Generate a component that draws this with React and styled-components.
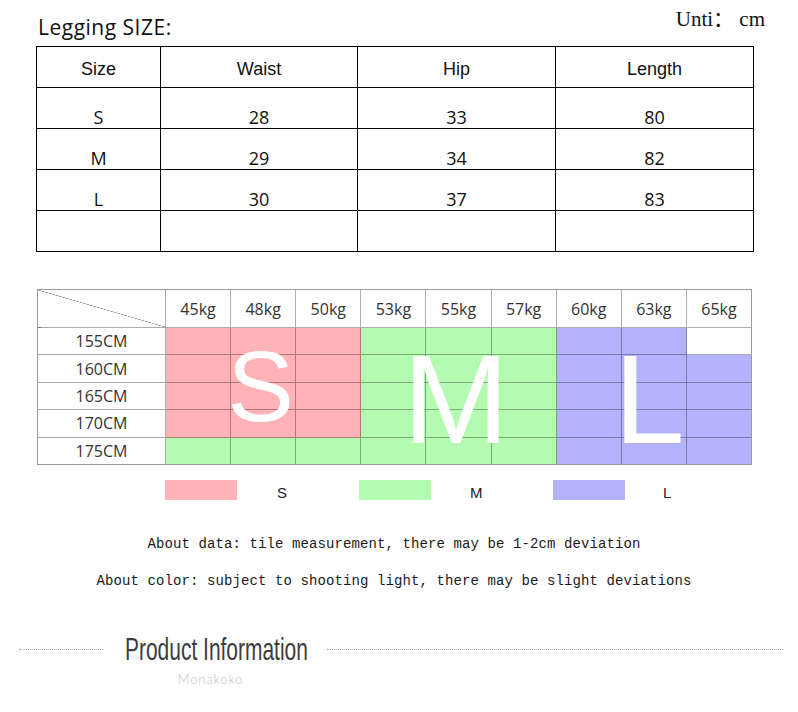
import React from 'react';
import styled, { createGlobalStyle } from 'styled-components';

const GlobalStyle = createGlobalStyle`
body {
    margin: 0;
    background: #fff;
}
`;

const Page = styled.div`
width: 798px;
height: 712px;
overflow: hidden;
background: #fff;
display: flex;
flex-direction: column;
`;

const TitleBar = styled.div`
height: 46px;
display: flex;
justify-content: space-between;
align-items: flex-start;
padding: 0 33px 0 38px;
box-sizing: border-box;
`;

const Heading = styled.div`
margin-top: 14px;
font-family: "Open Sans", sans-serif;
font-size: 21px;
letter-spacing: 0.5px;
line-height: 26px;
color: #111;
`;

const Unit = styled.div`
margin-top: 6px;
font-family: "Liberation Serif", "Noto Sans CJK SC", serif;
font-size: 21px;
line-height: 26px;
color: #111;
white-space: pre;
`;

const SizeTable = styled.div`
margin-left: 36px;
display: grid;
grid-template-columns: 124px 197px 198px 198px;
grid-auto-rows: 41px;
width: max-content;
border-top: 1px solid #000;
border-left: 1px solid #000;
`;

const TableCell = styled.div`
box-sizing: border-box;
border-right: 1px solid #000;
border-bottom: 1px solid #000;
display: flex;
justify-content: center;
align-items: flex-start;
padding-top: ${p => p.$head ? '12px' : '17px'};
font-family: ${p => p.$head ? '"Liberation Sans", Arial' : '"Open Sans"'}, sans-serif;
font-size: 18px;
line-height: ${p => p.$head ? '21px' : '24px'};
color: #111;
`;

const Chart = styled.div`
margin: 37px 0 0 37px;
width: 715px;
height: 176px;
box-sizing: border-box;
display: grid;
grid-template-columns: 128px repeat(9, 1fr);
grid-template-rows: 38px repeat(5, 1fr);
border-top: 1px solid #9a9a9a;
border-left: 1px solid #9a9a9a;
`;

const ChartCell = styled.div`
grid-row: ${p => p.$row};
grid-column: ${p => p.$col};
box-sizing: border-box;
border-right: 1px solid ${p => p.$edge ? '#9a9a9a' : 'rgba(0, 0, 0, 0.32)'};
border-bottom: 1px solid ${p => p.$edgeB ? '#9a9a9a' : 'rgba(0, 0, 0, 0.32)'};
background: ${p => p.$bg || '#fff'};
display: flex;
align-items: center;
justify-content: center;
font-family: "Open Sans", sans-serif;
font-size: 16px;
color: #333;
`;

const Corner = styled(ChartCell)`
background: linear-gradient(to top right, transparent calc(50% - 0.6px), #8a8a8a 50%, transparent calc(50% + 0.6px));
`;

const BigLetter = styled.div`
grid-row: 2 / 7;
grid-column: ${p => p.$cols};
z-index: 1;
justify-self: center;
align-self: start;
margin-top: 8px;
margin-right: ${p => p.$shift || 0}px;
font-family: "Liberation Sans", Arial, sans-serif;
font-size: ${p => p.$size}px;
line-height: 1;
color: #fff;
pointer-events: none;
`;

const Legend = styled.div`
margin: 15px 0 0 165px;
display: grid;
grid-template-columns: repeat(3, 194px);
`;

const LegendItem = styled.div`
display: flex;
align-items: center;
height: 20px;
`;

const Swatch = styled.div`
width: 72px;
height: 20px;
background: ${p => p.$color};
`;

const LegendLabel = styled.span`
margin: 4px 0 0 ${p => p.$gap}px;
font-family: "Liberation Sans", Arial, sans-serif;
font-size: 15px;
color: #222;
`;

const Notes = styled.div`
margin-top: 35px;
padding-right: 10px;
display: flex;
flex-direction: column;
align-items: center;
gap: 19px;
`;

const Note = styled.div`
font-family: "Liberation Mono", monospace;
font-size: 14px;
letter-spacing: 0.1px;
line-height: 18px;
color: #1a1a1a;
white-space: pre;
`;

const Footer = styled.div`
margin-top: 41px;
display: flex;
align-items: flex-start;
padding: 0 15px 0 19px;
`;

const Rule = styled.div`
margin-top: 18px;
border-top: 1px dotted #a8a8a8;
width: ${p => p.$width ? `${p.$width}px` : 'auto'};
flex: ${p => p.$width ? 'none' : 1};
`;

const TitleBlock = styled.div`
width: 183px;
margin: 0 19px 0 22px;
display: flex;
flex-direction: column;
align-items: center;
`;

const Title = styled.div`
align-self: stretch;
height: 36px;
line-height: 36px;
white-space: nowrap;
font-family: "Liberation Sans", Arial, sans-serif;
font-size: 32px;
color: #3d3d3d;

span {
    display: inline-block;
    transform: scaleX(0.655);
    transform-origin: left center;
}
`;

const Sub = styled.div`
margin: 4px 12px 0 0;
font-family: Lato, sans-serif;
font-weight: 300;
font-size: 13px;
line-height: 16px;
letter-spacing: 0.9px;
color: #c2c2c2;
`;

const PINK = '#ffb3b6';
const GREEN = '#b3fbb1';
const BLUE = '#b3b3fb';

const sizeRows = [
    ['S', '28', '33', '80'],
    ['M', '29', '34', '82'],
    ['L', '30', '37', '83'],
    ['', '', '', ''],
];

const weights = ['45kg', '48kg', '50kg', '53kg', '55kg', '57kg', '60kg', '63kg', '65kg'];

const S = PINK, M = GREEN, L = BLUE, W = '#fff';
const heights = [
    ['155CM', [S, S, S, M, M, M, L, L, W]],
    ['160CM', [S, S, S, M, M, M, L, L, L]],
    ['165CM', [S, S, S, M, M, M, L, L, L]],
    ['170CM', [S, S, S, M, M, M, L, L, L]],
    ['175CM', [M, M, M, M, M, M, L, L, L]],
];

const App = () => {
    return (
        <Page>
            <GlobalStyle />
            <TitleBar>
                <Heading>Legging SIZE:</Heading>
                <Unit>Unti： cm</Unit>
            </TitleBar>

            <SizeTable>
                {['Size', 'Waist', 'Hip', 'Length'].map(h => (
                    <TableCell key={h} $head>{h}</TableCell>
                ))}
                {sizeRows.map((row, r) =>
                    row.map((v, c) => <TableCell key={`${r}-${c}`}>{v}</TableCell>)
                )}
            </SizeTable>

            <Chart>
                <Corner $row={1} $col={1} />
                {weights.map((w, i) => (
                    <ChartCell key={w} $row={1} $col={i + 2} $edge={i === 8}>{w}</ChartCell>
                ))}
                {heights.map(([h, colors], r) => (
                    <React.Fragment key={h}>
                        <ChartCell $row={r + 2} $col={1} $edgeB={r === 4}>{h}</ChartCell>
                        {colors.map((bg, c) => (
                            <ChartCell
                                key={c}
                                $row={r + 2}
                                $col={c + 2}
                                $bg={bg}
                                $edge={c === 8}
                                $edgeB={r === 4}
                            />
                        ))}
                    </React.Fragment>
                ))}
                <BigLetter $cols="2 / 5" $size={100} $shift={6}>S</BigLetter>
                <BigLetter $cols="5 / 8" $size={127} $shift={6}>M</BigLetter>
                <BigLetter $cols="8 / 11" $size={127} $shift={10}>L</BigLetter>
            </Chart>

            <Legend>
                <LegendItem><Swatch $color={PINK} /><LegendLabel $gap={40}>S</LegendLabel></LegendItem>
                <LegendItem><Swatch $color={GREEN} /><LegendLabel $gap={39}>M</LegendLabel></LegendItem>
                <LegendItem><Swatch $color={BLUE} /><LegendLabel $gap={38}>L</LegendLabel></LegendItem>
            </Legend>

            <Notes>
                <Note>About data: tile measurement, there may be 1-2cm deviation</Note>
                <Note>About color: subject to shooting light, there may be slight deviations</Note>
            </Notes>

            <Footer>
                <Rule $width={84} />
                <TitleBlock>
                    <Title><span>Product Information</span></Title>
                    <Sub>Monakoko</Sub>
                </TitleBlock>
                <Rule />
            </Footer>
        </Page>
    );
};

export default App;
